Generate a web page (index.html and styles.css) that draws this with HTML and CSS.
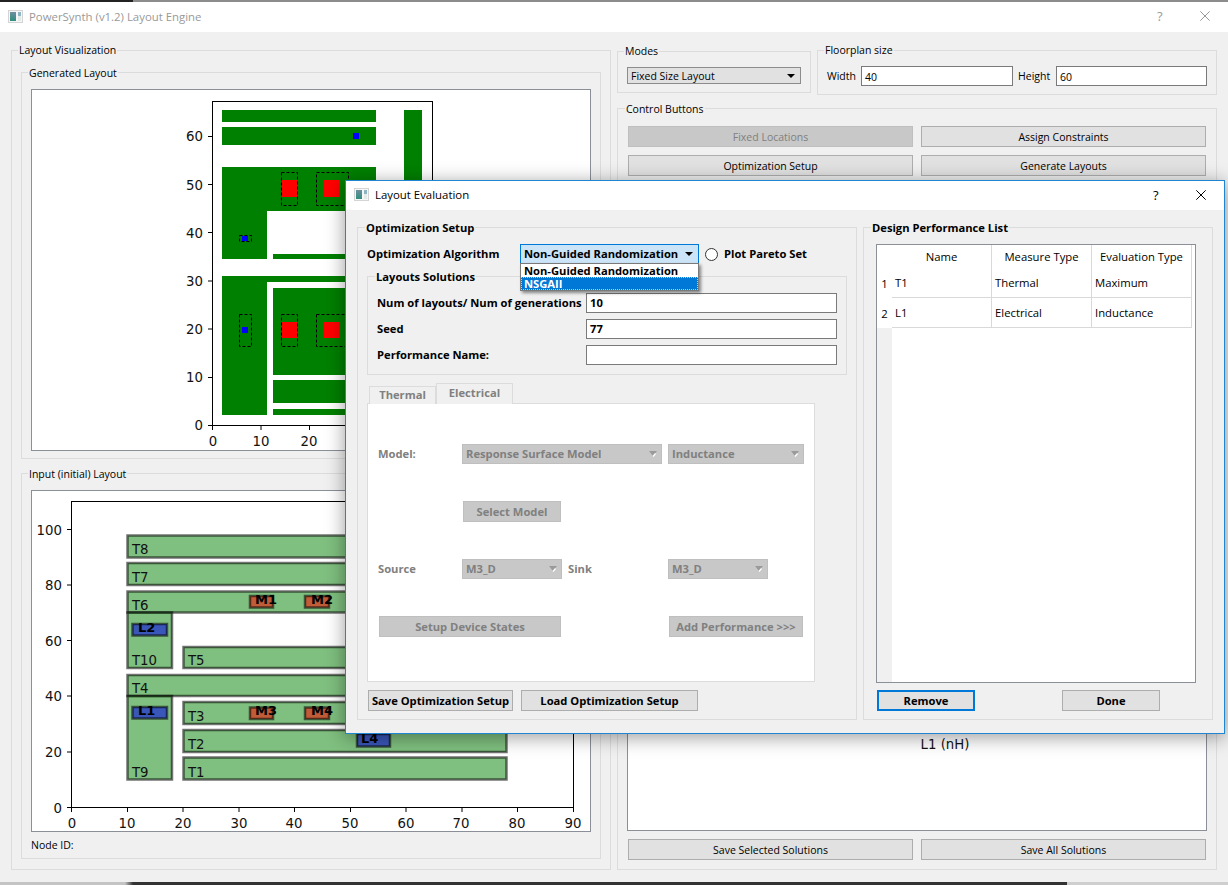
FILE: index.html
```html
<!DOCTYPE html>
<html lang="en">
<head>
  <meta charset="UTF-8">
  <title>PowerSynth (v1.2) Layout Engine</title>
  <link rel="stylesheet" href="styles.css">
</head>
<body>
  <svg class="defs" width="0" height="0">
    <defs>
      <linearGradient id="icon-fill" x1="0" y1="0" x2="0" y2="1">
        <stop offset="0" stop-color="#6f8f9f"/>
        <stop offset="1" stop-color="#2f8f7f"/>
      </linearGradient>
      <symbol id="app-icon" viewBox="0 0 15 13">
        <rect width="15" height="13" fill="#d4d4d4"/>
        <rect x="1" y="1" width="13" height="11" fill="#f6f6f6"/>
        <rect x="2" y="2" width="6" height="9" fill="url(#icon-fill)"/>
        <rect x="10" y="2" width="3" height="4" fill="#8fb4c4"/>
        <rect x="10" y="6" width="3" height="5" fill="#e3ebe8"/>
      </symbol>
      <symbol id="arrow-off" viewBox="0 0 8 6">
        <path d="M0 0h8L4 5z" fill="#9a9a9a"/>
        <path d="M6.500 2.500L4 5.500" stroke="#fff" stroke-width="1.300" fill="none"/>
      </symbol>
      <symbol id="close-x" viewBox="0 0 10 10">
        <path d="M0.300 0.300l9.400 9.400M9.700 0.300l-9.400 9.400" stroke="currentColor" stroke-width="1" fill="none"/>
      </symbol>
    </defs>
  </svg>

  <div class="strip strip-top"></div>

  <!-- main window -->
  <div class="window">
    <header class="titlebar titlebar-off">
      <svg class="app-icon"><use href="#app-icon"/></svg>
      <span class="title-text">PowerSynth (v1.2) Layout Engine</span>
      <span class="help">?</span>
      <svg class="close"><use href="#close-x"/></svg>
    </header>

    <div class="main-body">
      <section class="group vis-group">
        <span class="group-title">Layout Visualization</span>

        <section class="group plot-group plot-group-top">
          <span class="group-title">Generated Layout</span>
          <div class="canvas canvas-top">
            <svg class="plot" width="558" height="360" viewBox="32 90 558 360">
              <g fill="#008000">
                <rect x="222" y="110" width="154" height="12"/>
                <rect x="222" y="127" width="154" height="18"/>
                <rect x="404" y="110" width="18" height="305"/>
                <rect x="222" y="167" width="154" height="44"/>
                <rect x="222" y="211" width="45" height="48"/>
                <rect x="273" y="254" width="103" height="5"/>
                <rect x="222" y="276" width="154" height="6"/>
                <rect x="222" y="282" width="45" height="133"/>
                <rect x="273" y="288" width="103" height="87"/>
                <rect x="273" y="380" width="103" height="23"/>
                <rect x="273" y="409" width="103" height="6"/>
              </g>
              <g fill="#f00">
                <rect x="281" y="180" width="17" height="17"/>
                <rect x="324" y="180" width="16" height="17"/>
                <rect x="281" y="322" width="17" height="16"/>
                <rect x="324" y="322" width="16" height="16"/>
              </g>
              <g class="dash">
                <rect x="281.500" y="172.500" width="16" height="33"/>
                <rect x="316.500" y="172.500" width="32" height="33"/>
                <rect x="239.500" y="235.500" width="12" height="6"/>
                <rect x="239.500" y="314.500" width="12" height="32"/>
                <rect x="281.500" y="314.500" width="16" height="32"/>
                <rect x="316.500" y="314.500" width="32" height="32"/>
              </g>
              <g fill="#00f">
                <rect x="353" y="133" width="6" height="6"/>
                <rect x="242" y="236" width="6" height="5"/>
                <rect x="242" y="327" width="6" height="6"/>
              </g>
              <rect class="axes" x="212.500" y="101.500" width="220" height="324"/>
              <path class="axes" d="M208 136.500h4.500M208 184.500h4.500M208 232.500h4.500M208 281h4.500M208 329h4.500M208 377.500h4.500M208 425.500h4.500M212.500 425v5M261 425v5M309.500 425v5M358 425v5M406 425v5"/>
              <g class="tick tick-y">
                <text x="203" y="141">60</text>
                <text x="203" y="190">50</text>
                <text x="203" y="238">40</text>
                <text x="203" y="286">30</text>
                <text x="203" y="334">20</text>
                <text x="203" y="382">10</text>
                <text x="203" y="430">0</text>
              </g>
              <g class="tick tick-x">
                <text x="213" y="446">0</text>
                <text x="261" y="446">10</text>
                <text x="309" y="446">20</text>
              </g>
            </svg>
          </div>
        </section>

        <section class="group plot-group plot-group-low">
          <span class="group-title">Input (initial) Layout</span>
          <div class="canvas canvas-low">
            <svg class="plot" width="558" height="340" viewBox="32 491 558 340">
              <g class="trace">
                <rect x="183.500" y="757.500" width="323" height="22"/>
                <rect x="183.500" y="730" width="323" height="22"/>
                <rect x="183.500" y="702" width="323" height="22"/>
                <rect x="127.500" y="675" width="379" height="21"/>
                <rect x="183.500" y="647" width="323" height="21"/>
                <rect x="127.500" y="591.500" width="379" height="21"/>
                <rect x="127.500" y="563" width="379" height="22"/>
                <rect x="127.500" y="535.500" width="379" height="22"/>
                <rect x="127.500" y="612.500" width="44.500" height="55.500"/>
                <rect x="127.500" y="696" width="44.500" height="83.500"/>
              </g>
              <g class="part part-m">
                <rect x="250" y="596" width="23" height="11.500"/>
                <rect x="305" y="596" width="24" height="11.500"/>
                <rect x="250" y="707.500" width="23" height="11.500"/>
                <rect x="305" y="707.500" width="24" height="11.500"/>
              </g>
              <g class="part part-l">
                <rect x="132.500" y="624" width="34.500" height="11.500"/>
                <rect x="132.500" y="707" width="34.500" height="11.500"/>
                <rect x="357" y="734" width="33" height="12.500"/>
              </g>
              <g class="tick">
                <text x="132" y="554">T8</text>
                <text x="132" y="582">T7</text>
                <text x="132" y="610">T6</text>
                <text x="132" y="665">T10</text>
                <text x="188" y="665">T5</text>
                <text x="132" y="693">T4</text>
                <text x="188" y="721">T3</text>
                <text x="188" y="749">T2</text>
                <text x="188" y="777">T1</text>
                <text x="132" y="777">T9</text>
              </g>
              <g class="part-label">
                <text x="255" y="604">M1</text>
                <text x="311" y="604">M2</text>
                <text x="138" y="632">L2</text>
                <text x="138" y="715">L1</text>
                <text x="255" y="715">M3</text>
                <text x="311" y="715">M4</text>
                <text x="361" y="743">L4</text>
              </g>
              <rect class="axes" x="71.500" y="501.500" width="502" height="306"/>
              <path class="axes" d="M67 529.500h4.500M67 585h4.500M67 640.500h4.500M67 696h4.500M67 752h4.500M67 807.500h4.500M71.500 807v5M127.500 807v5M183 807v5M239 807v5M294.500 807v5M350.500 807v5M406 807v5M462 807v5M517.500 807v5M573.500 807v5"/>
              <g class="tick tick-y">
                <text x="62" y="535">100</text>
                <text x="62" y="590">80</text>
                <text x="62" y="646">60</text>
                <text x="62" y="701">40</text>
                <text x="62" y="757">20</text>
                <text x="62" y="813">0</text>
              </g>
              <g class="tick tick-x">
                <text x="72" y="828">0</text>
                <text x="127" y="828">10</text>
                <text x="183" y="828">20</text>
                <text x="239" y="828">30</text>
                <text x="294" y="828">40</text>
                <text x="350" y="828">50</text>
                <text x="406" y="828">60</text>
                <text x="461" y="828">70</text>
                <text x="517" y="828">80</text>
                <text x="573" y="828">90</text>
              </g>
            </svg>
          </div>
          <div class="node-id">Node ID:</div>
        </section>
      </section>

      <div class="right-col">
        <div class="top-row">
          <section class="group modes-group">
            <span class="group-title">Modes</span>
            <div class="combo combo-main">Fixed Size Layout<i class="arrow"></i></div>
          </section>
          <section class="group floor-group">
            <span class="group-title">Floorplan size</span>
            <div class="floor-row">
              <label class="floor-w">Width</label>
              <div class="input floor-in-w">40</div>
              <label class="floor-h">Height</label>
              <div class="input floor-in-h">60</div>
            </div>
          </section>
        </div>

        <section class="group control-group">
          <span class="group-title">Control Buttons</span>
          <div class="btn-grid">
            <button class="btn btn-off">Fixed Locations</button>
            <button class="btn">Assign Constraints</button>
            <button class="btn">Optimization Setup</button>
            <button class="btn">Generate Layouts</button>
          </div>
          <div class="canvas canvas-chart">
            <svg class="plot" width="578" height="645" viewBox="628 185 578 645">
              <text class="tick" x="945" y="749" text-anchor="middle">L1 (nH)</text>
            </svg>
          </div>
          <div class="btn-grid">
            <button class="btn">Save Selected Solutions</button>
            <button class="btn">Save All Solutions</button>
          </div>
        </section>
      </div>
    </div>
  </div>

  <div class="strip strip-bottom"></div>

  <!-- Layout Evaluation dialog -->
  <div class="dialog">
    <header class="titlebar">
      <svg class="app-icon"><use href="#app-icon"/></svg>
      <span class="title-text">Layout Evaluation</span>
      <span class="help">?</span>
      <svg class="close"><use href="#close-x"/></svg>
    </header>

    <div class="dialog-body">
      <section class="group setup-group">
        <span class="group-title">Optimization Setup</span>

        <div class="algo-row">
          <label class="algo-label">Optimization Algorithm</label>
          <div class="combo combo-focus">
            Non-Guided Randomization<i class="arrow"></i>
            <ul class="dropdown">
              <li>Non-Guided Randomization</li>
              <li class="picked">NSGAII</li>
            </ul>
          </div>
          <span class="radio"></span>
          <span class="radio-label">Plot Pareto Set</span>
        </div>

        <section class="group solutions-group">
          <span class="group-title">Layouts Solutions</span>
          <div class="form-grid">
            <label>Num of layouts/ Num of generations</label>
            <div class="input">10</div>
            <label>Seed</label>
            <div class="input">77</div>
            <label>Performance Name:</label>
            <div class="input"></div>
          </div>
        </section>

        <nav class="tabs">
          <a class="tab tab-thermal">Thermal</a>
          <a class="tab tab-electrical">Electrical</a>
        </nav>
        <div class="pane">
          <span class="off-label model-label">Model:</span>
          <div class="combo combo-off span-model">Response Surface Model<svg class="arrow-off"><use href="#arrow-off"/></svg></div>
          <div class="combo combo-off span-wide">Inductance<svg class="arrow-off"><use href="#arrow-off"/></svg></div>

          <button class="btn btn-off col-select">Select Model</button>

          <span class="off-label source-label">Source</span>
          <div class="combo combo-off col-source">M3_D<svg class="arrow-off"><use href="#arrow-off"/></svg></div>
          <span class="off-label sink-label">Sink</span>
          <div class="combo combo-off col-sink">M3_D<svg class="arrow-off"><use href="#arrow-off"/></svg></div>

          <button class="btn btn-off span-states">Setup Device States</button>
          <button class="btn btn-off span-add">Add Performance &gt;&gt;&gt;</button>
        </div>

        <div class="setup-actions">
          <button class="btn btn-save">Save Optimization Setup</button>
          <button class="btn btn-load">Load Optimization Setup</button>
        </div>
      </section>

      <section class="group perf-group">
        <span class="group-title">Design Performance List</span>
        <div class="table-wrap">
          <table class="perf-table">
            <thead>
              <tr><th class="row-head"></th><th>Name</th><th>Measure Type</th><th>Evaluation Type</th></tr>
            </thead>
            <tbody>
              <tr><th class="row-head">1</th><td>T1</td><td>Thermal</td><td>Maximum</td></tr>
              <tr><th class="row-head">2</th><td>L1</td><td>Electrical</td><td>Inductance</td></tr>
            </tbody>
          </table>
        </div>
        <div class="perf-actions">
          <button class="btn btn-remove">Remove</button>
          <button class="btn btn-done">Done</button>
        </div>
      </section>
    </div>
  </div>
</body>
</html>
```

FILE: styles.css
```css
* {
  box-sizing: border-box;
}
html, body {
  margin: 0;
  height: 885px;
  overflow: hidden;
}
body {
  position: relative;
  background: #333;
  color: #000;
  font-family: "Open Sans", "Noto Sans", sans-serif;
  font-size: 10.5px;
}
.defs {
  position: absolute;
}

/* desktop behind the windows */
.strip {
  height: 2px;
}
.strip-top {
  background: linear-gradient(90deg, #222 133px, #8c8c8c 133px);
}
.strip-bottom {
  height: 3px;
  background: linear-gradient(90deg, #c4c4c4 125px, #333 133px, #333 1067px, #cfcfcf 1067px);
}

/* windows */
.window {
  height: 880px;
  background: #f0f0f0;
}
.titlebar {
  display: flex;
  align-items: center;
  height: 30px;
  padding: 0 18px 2px 8px;
  background: #fff;
  font-size: 11.4px;
}
.titlebar-off {
  color: #999;
}
.app-icon {
  width: 15px;
  height: 13px;
  margin-right: 6px;
}
.help {
  margin-left: auto;
  margin-right: 36px;
  width: 7px;
  font-size: 13px;
}
.close {
  width: 10px;
  height: 10px;
}
.main-body {
  display: grid;
  grid-template-columns: 600px 600px;
  column-gap: 6px;
  padding: 18px 0 0 11px;
}

/* group boxes */
.group {
  border: 1px solid #dcdcdc;
}
.group-title {
  display: block;
  width: fit-content;
  height: 14px;
  margin: -8px 0 0 -3px;
  padding: 0 1px;
  line-height: 14px;
  background: #f0f0f0;
  white-space: nowrap;
}
.plot-group .group-title,
.control-group .group-title,
.dialog .group-title {
  line-height: 16px;
}

/* left column */
.vis-group {
  height: 820px;
  padding: 0 9px;
}
.plot-group {
  padding: 0 9px;
}
.plot-group-top {
  height: 387px;
  margin-top: 15px;
}
.plot-group-low {
  height: 386px;
  margin-top: 14px;
}
.canvas {
  border: 1px solid #8a8f98;
  background: #fff;
  margin-top: 10px;
}
.canvas-top {
  height: 362px;
}
.canvas-low {
  height: 342px;
}
.plot {
  display: block;
}
.node-id {
  height: 27px;
  line-height: 27px;
}
.axes {
  fill: none;
  stroke: #000;
  stroke-width: 1;
}
.dash rect {
  fill: none;
  stroke: #000;
  stroke-width: 1;
  stroke-dasharray: 3 2;
}
.tick {
  font-family: "DejaVu Sans", sans-serif;
  font-size: 13.3px;
  fill: #111;
}
.tick-y {
  text-anchor: end;
}
.tick-x {
  text-anchor: middle;
}
.trace rect {
  fill: rgba(0, 128, 0, .5);
  stroke: rgba(0, 0, 0, .55);
  stroke-width: 2.5;
}
.part rect {
  stroke: rgba(0, 0, 0, .55);
  stroke-width: 2.5;
}
.part-m rect {
  fill: #c05c38;
}
.part-l rect {
  fill: #3a56b8;
}
.part-label {
  font-family: "DejaVu Sans", sans-serif;
  font-weight: 700;
  font-size: 13px;
}

/* right column */
.right-col {
  display: flex;
  flex-direction: column;
}
.top-row {
  display: flex;
  align-items: flex-start;
  gap: 6px;
}
.modes-group {
  width: 194px;
  height: 42px;
  margin-top: 1px;
  padding: 0 9px;
}
.floor-group {
  width: 400px;
  height: 45px;
  padding: 0 9px;
}
.floor-row {
  display: flex;
  align-items: center;
  margin-top: 9px;
}
.floor-row .input {
  line-height: 21px;
}
.floor-w {
  width: 34px;
}
.floor-h {
  width: 38px;
  margin-left: 5px;
}
.floor-in-w {
  width: 152px;
}
.floor-in-h {
  width: 151px;
}
.control-group {
  height: 762px;
  margin-top: 13px;
  padding: 0 10px;
}
.btn-grid {
  display: grid;
  grid-template-columns: 285px 285px;
  gap: 8px;
}
.control-group .btn-grid:first-of-type {
  margin-top: 11px;
}
.canvas-chart {
  width: 580px;
  height: 647px;
  margin: 8px -1px;
}

/* widgets */
.btn {
  height: 21px;
  padding: 0;
  border: 1px solid #adadad;
  border-radius: 0;
  background: #e1e1e1;
  color: #000;
  font: inherit;
  white-space: nowrap;
}
.btn-off {
  background: #c8c8c8;
  border-color: #bfbfbf;
  color: #808080;
}
.input {
  height: 20px;
  padding-left: 3px;
  line-height: 18px;
  border: 1px solid #7a7a7a;
  background: #fff;
}
.combo {
  position: relative;
  display: flex;
  align-items: center;
  height: 20px;
  padding: 0 0 2px 3px;
  border: 1px solid #adadad;
  background: #e1e1e1;
  white-space: nowrap;
}
.combo-main {
  height: 17px;
  margin-top: 9px;
  padding-bottom: 0;
  border-color: #8c8c8c;
}
.arrow {
  position: absolute;
  right: 5px;
  top: 50%;
  margin-top: -2px;
  border: 4px solid transparent;
  border-top: 4px solid #000;
  border-bottom: 0;
}
.combo-focus {
  width: 179px;
  border-color: #0078d7;
  background: #cce4f7;
}
.combo-off {
  border-color: #bfbfbf;
  background: #c8c8c8;
  color: #808080;
}
.arrow-off {
  position: absolute;
  right: 4px;
  top: 6px;
  width: 8px;
  height: 6px;
}

/* dialog */
.dialog {
  position: absolute;
  left: 345px;
  top: 180px;
  width: 880px;
  height: 554px;
  border: 1px solid #1f84d2;
  background: #f0f0f0;
  box-shadow: 0 3px 18px rgba(0, 0, 0, .4);
  font-size: 11.2px;
  font-weight: 700;
}
.dialog .titlebar {
  height: 29px;
  font-size: 11.4px;
  font-weight: 400;
}
.dialog .close {
  color: #000;
}
.dialog .group-title {
  margin-left: -2px;
}
.dialog .perf-group .group-title {
  margin-left: -5px;
}
.dialog-body {
  display: flex;
  gap: 6px;
  padding: 17px 11px 0;
}
.setup-group {
  width: 500px;
  height: 493px;
  padding: 0 9px;
}
.algo-row {
  position: relative;
  display: flex;
  align-items: center;
  height: 20px;
  margin-top: 10px;
}
.algo-label {
  width: 153px;
  padding-bottom: 2px;
}
.radio-label {
  padding-bottom: 2px;
}
.dropdown {
  position: absolute;
  left: -1px;
  top: 18px;
  z-index: 2;
  width: 179px;
  height: 28px;
  margin: 0;
  padding: 0;
  list-style: none;
  border: 1px solid #7a7a7a;
  background: #fff;
  box-shadow: 2px 2px 3px rgba(0, 0, 0, .45);
}
.dropdown li {
  height: 13px;
  padding-left: 3px;
  line-height: 13px;
}
.dropdown li:first-child {
  line-height: 14px;
}
.dropdown .picked {
  background: #0078d7;
  color: #fff;
  outline: 1px dotted #f5c78a;
  outline-offset: -1px;
}
.radio {
  width: 13px;
  height: 13px;
  margin: 0 6px;
  border: 1px solid #333;
  border-radius: 50%;
  background: #fff;
}
.solutions-group {
  height: 99px;
  margin-top: 12px;
  padding: 0 9px;
}
.form-grid {
  display: grid;
  grid-template-columns: 209px 251px;
  row-gap: 6px;
  align-items: center;
  margin-top: 10px;
}
.form-grid label {
  padding-bottom: 2px;
}

/* tabs */
.tabs {
  display: flex;
  align-items: flex-end;
  height: 20px;
  margin-top: 8px;
  padding-left: 2px;
}
.tab {
  display: block;
  margin-bottom: -1px;
  border: 1px solid #dcdcdc;
  border-bottom: 0;
  background: #f0f0f0;
  color: #808080;
  text-align: center;
}
.tab-thermal {
  width: 67px;
  height: 18px;
  line-height: 16px;
}
.tab-electrical {
  position: relative;
  width: 77px;
  height: 21px;
  line-height: 18px;
}
.pane {
  display: grid;
  grid-template-columns: 84px 100px 6px 94px 6px 100px 36px;
  grid-template-rows: 20px 21px 20px 21px;
  row-gap: 37px;
  align-items: center;
  width: 448px;
  height: 279px;
  padding: 40px 0 0 10px;
  border: 1px solid #dcdcdc;
  background: #fff;
}
.off-label {
  padding-bottom: 2px;
  color: #808080;
}
.model-label {
  grid-column: 1;
  grid-row: 1;
}
.span-model {
  grid-column: 2 / 5;
  grid-row: 1;
}
.span-wide {
  grid-column: 6 / 8;
  grid-row: 1;
}
.col-select {
  grid-column: 2;
  grid-row: 2;
  margin: 0 1px;
}
.source-label {
  grid-column: 1;
  grid-row: 3;
}
.col-source {
  grid-column: 2;
  grid-row: 3;
}
.sink-label {
  grid-column: 3 / 5;
  grid-row: 3;
  padding-left: 6px;
}
.col-sink {
  grid-column: 6;
  grid-row: 3;
}
.span-states {
  grid-column: 1 / 3;
  grid-row: 4;
  margin: 0 1px;
}
.span-add {
  grid-column: 6 / 8;
  grid-row: 4;
  margin: 0 1px;
}
.setup-actions {
  display: flex;
  gap: 8px;
  margin: 8px 0 0 1px;
}
.btn-save {
  width: 145px;
}
.btn-load {
  width: 177px;
}

/* performance list */
.perf-group {
  width: 350px;
  height: 493px;
  padding: 0 12px;
}
.table-wrap {
  width: 320px;
  height: 439px;
  margin-top: 10px;
  border: 1px solid #8a8f98;
  background: linear-gradient(90deg, #f0f0f0 15px, #fff 15px);
}
.perf-table {
  width: 315px;
  table-layout: fixed;
  border-collapse: separate;
  border-spacing: 0;
  font-size: 11.3px;
  font-weight: 400;
}
.perf-table th,
.perf-table td {
  height: 30px;
  width: 100px;
  padding: 0 0 0 3px;
  background: #fff;
  border-right: 1px solid #d9d9d9;
  border-bottom: 1px solid #d9d9d9;
  font-weight: 400;
}
.perf-table thead th {
  height: 23px;
  padding: 0;
  border-bottom: 0;
}
.perf-table .row-head {
  width: 15px;
  padding: 0;
  border: 0;
  text-align: center;
}
.perf-actions {
  display: flex;
  gap: 87px;
  margin: 7px 0 0 1px;
}
.btn-remove,
.btn-done {
  width: 98px;
}
.btn-remove {
  border: 2px solid #0078d7;
}
```
